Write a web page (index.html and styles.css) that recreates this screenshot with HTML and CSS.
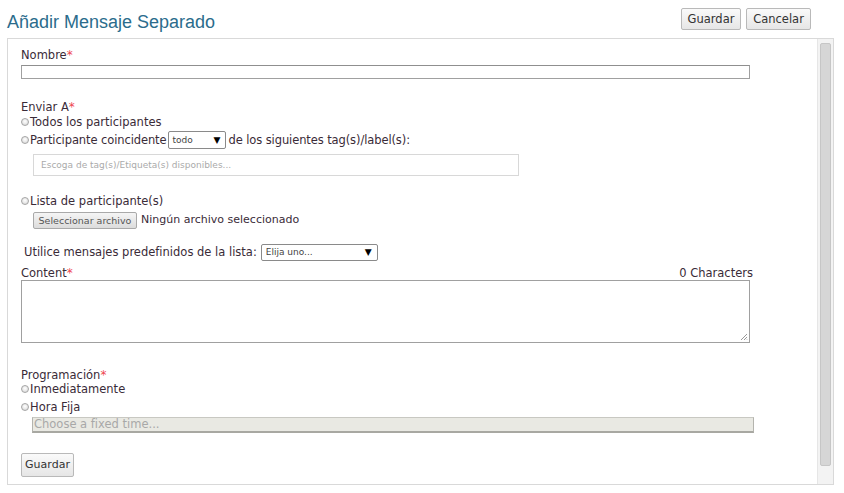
FILE: index.html
```html
<!DOCTYPE html>
<html lang="es">
<head>
<meta charset="utf-8">
<title>Añadir Mensaje Separado</title>
<link rel="stylesheet" href="styles.css">
</head>
<body>
<header class="header">
  <h1 class="title">Añadir Mensaje Separado</h1>
  <div class="actions">
    <button class="btn btn-save">Guardar</button>
    <button class="btn btn-cancel">Cancelar</button>
  </div>
</header>
<main class="panel">
  <form class="form">
    <div class="label">Nombre<span class="req">*</span></div>
    <div class="input name-input"></div>

    <div class="label sec-enviar">Enviar A<span class="req">*</span></div>
    <div class="radio-row todos-row"><span class="radio"></span>Todos los participantes</div>
    <div class="radio-row match-row"><span class="radio"></span>Participante coincidente<span class="select sel-todo"><span>todo</span><span class="arrow">▼</span></span>de los siguientes tag(s)/label(s):</div>
    <div class="tags-input">Escoga de tag(s)/Etiqueta(s) disponibles...</div>

    <div class="radio-row sec-lista"><span class="radio"></span>Lista de participante(s)</div>
    <div class="file-row"><span class="file-btn">Seleccionar archivo</span>Ningún archivo seleccionado</div>

    <div class="predef-row">Utilice mensajes predefinidos de la lista:<span class="select sel-predef"><span>Elija uno...</span><span class="arrow">▼</span></span></div>

    <div class="content-head"><span>Content<span class="req">*</span></span><span>0 Characters</span></div>
    <div class="textarea"><svg class="grip" width="8" height="8" viewBox="0 0 8 8"><path d="M7 1L1 7M7 4L4 7M7 6.5L6.5 7" stroke="#999" stroke-width="1" fill="none"/></svg></div>

    <div class="label sec-prog">Programación<span class="req">*</span></div>
    <div class="radio-row"><span class="radio"></span>Inmediatamente</div>
    <div class="radio-row hora-row"><span class="radio"></span>Hora Fija</div>
    <div class="time-input">Choose a fixed time...</div>

    <button type="button" class="btn save-btn">Guardar</button>
  </form>
  <div class="scrollbar"><div class="thumb"></div></div>
</main>
</body>
</html>
```
FILE: styles.css
```css
* { box-sizing: border-box; }
html, body { margin: 0; padding: 0; background: #fff; }
body {
  width: 844px;
  height: 493px;
  overflow: hidden;
  font-family: "DejaVu Sans", Verdana, sans-serif;
  font-size: 11.5px;
  color: #3a2b38;
}
.header {
  display: flex;
  justify-content: space-between;
  align-items: flex-start;
  padding: 8px 33px 0 7px;
  height: 38px;
}
.title {
  margin: 3px 0 0 0;
  font-family: "Liberation Sans", Arial, sans-serif;
  font-weight: normal;
  font-size: 18px;
  line-height: 22px;
  color: #2b6c8c;
}
.actions { display: flex; gap: 5px; }
.btn {
  font-family: "DejaVu Sans", Verdana, sans-serif;
  font-size: 11.5px;
  color: #333;
  height: 22px;
  padding: 0 5px;
  border: 1px solid #b9b9b9;
  border-radius: 2px;
  background: linear-gradient(#fafafa, #e6e6e6);
  line-height: 20px;
}
.btn-save { width: 60px; padding: 0; }
.btn-cancel { width: 65px; padding: 0; }
.panel {
  display: flex;
  margin-left: 7px;
  width: 827px;
  height: 447px;
  border: 1px solid #d9d9d9;
}
.form {
  flex: 1;
  padding: 9px 0 0 13px;
}
.label, .radio-row, .content-head, .predef-row, .file-row {
  line-height: 14px;
  white-space: nowrap;
}
.req { color: #ee4650; font-size: 12px; }
.input {
  width: 729px;
  height: 14px;
  border: 1px solid #a0a0a0;
  border-top-color: #8f8f8f;
  margin-top: 3px;
}
.sec-enviar { margin-top: 21px; }
.radio-row { display: flex; align-items: center; }
.todos-row { margin-top: 1px; }
.radio {
  display: inline-block;
  width: 8px;
  height: 8px;
  border-radius: 50%;
  border: 1px solid #a5a5a5;
  background: radial-gradient(circle at 50% 40%, #fff, #d4d4d4);
  margin: 0 1px 0 0;
}
.match-row { margin-top: 2px; height: 18px; letter-spacing: -0.1px; }
.select {
  display: inline-flex;
  align-items: center;
  justify-content: space-between;
  height: 18px;
  border: 1px solid #8a8a8a;
  border-radius: 2px;
  background: #fff;
  font-size: 9px;
  color: #444;
  padding: 0 4px 0 4px;
  letter-spacing: 0;
}
.arrow { font-size: 9px; color: #000; }
.sel-todo { width: 58px; margin: 0 3px 0 1px; }
.tags-input {
  margin: 5px 0 0 12px;
  width: 486px;
  height: 22px;
  border: 1px solid #d8d8d8;
  font-size: 9px;
  color: #aaa;
  line-height: 20px;
  padding-left: 7px;
}
.sec-lista { margin-top: 18px; }
.file-row {
  display: flex;
  align-items: center;
  margin: 3px 0 0 12px;
  height: 18px;
  font-size: 11px;
}
.file-btn {
  display: inline-block;
  width: 104px;
  height: 17px;
  margin-right: 4px;
  border: 1px solid #a9a9a9;
  border-radius: 2px;
  background: linear-gradient(#f5f5f5, #dcdcdc);
  font-size: 9.5px;
  color: #555;
  line-height: 15px;
  text-align: center;
}
.predef-row {
  display: flex;
  align-items: center;
  margin-top: 14px;
  padding-left: 3px;
  height: 18px;
}
.sel-predef { width: 117px; height: 17px; margin-left: 4px; padding-right: 5px; }
.content-head {
  display: flex;
  justify-content: space-between;
  width: 732px;
  margin-top: 5px;
}
.textarea {
  position: relative;
  width: 729px;
  height: 63px;
  border: 1px solid #a0a0a0;
}
.grip { position: absolute; right: 1px; bottom: 1px; }
.sec-prog { margin-top: 25px; }
.hora-row { margin-top: 4px; }
.time-input {
  margin: 3px 0 0 11px;
  width: 722px;
  height: 16px;
  border: 1px solid #b4b4ae;
  border-top-color: #c8c8c2;
  border-bottom: 2px solid #a8a8a2;
  background: #e9e9e3;
  font-size: 11.5px;
  line-height: 13px;
  color: #a8a8a8;
  padding-left: 1px;
}
.save-btn {
  display: block;
  margin-top: 20px;
  height: 24px;
  width: 53px;
  padding: 0;
  font-size: 11px;
}
.scrollbar {
  width: 16px;
  height: 100%;
  background: #f3f3f3;
  border-left: 1px solid #e6e6e6;
  padding: 4px 2px 0 2px;
}
.thumb {
  height: 423px;
  background: #d6d6d6;
  border: 1px solid #c6c6c6;
  border-radius: 2px;
}
```
